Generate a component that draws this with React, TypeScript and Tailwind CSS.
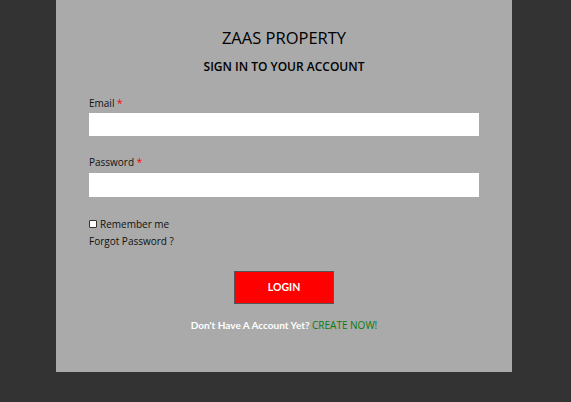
export default function App() {
  return (
    <div className="min-h-[402px] w-[571px] bg-[#333333]" style={{ fontFamily: '"Open Sans", sans-serif' }}>
      <div className="ml-[56px] h-[372px] w-[456px] bg-[#aaaaaa] px-[33px] pt-[27px]">
        <h1 className="text-center text-[16.5px] leading-[22px] text-black">ZAAS PROPERTY</h1>
        <h2 className="mt-[10px] text-center text-[12px] font-semibold leading-[16px] text-black">
          SIGN IN TO YOUR ACCOUNT
        </h2>

        <form className="mt-[21px]">
          <label className="block text-[10px] leading-[14px] text-[#111]">
            Email <span className="text-[#ff0000]">*</span>
          </label>
          <input type="email" className="mt-[3px] block h-[23px] w-[390px] bg-white outline-none" />

          <label className="mt-[19px] block text-[10px] leading-[14px] text-[#111]">
            Password <span className="text-[#ff0000]">*</span>
          </label>
          <input type="password" className="mt-[4px] block h-[24px] w-[390px] bg-white outline-none" />

          <div className="mt-[20px] flex items-center gap-[3px] text-[10px] leading-[14px] text-[#111]">
            <span className="inline-block h-[8px] w-[8px] rounded-[1px] border border-[#333] bg-white" />
            <span>Remember me</span>
          </div>
          <p className="mt-[3px] text-[10px] leading-[14px] text-[#111]">Forgot Password ?</p>

          <div className="mt-[23px] flex justify-center">
            <button
              type="button"
              className="h-[33px] w-[100px] border border-[#555] bg-[#ff0000] text-[10.5px] font-bold text-white"
              style={{ fontFamily: 'Lato, sans-serif' }}
            >
              LOGIN
            </button>
          </div>

          <p className="mt-[14px] text-center text-[10px] leading-[14px]" style={{ fontFamily: 'Lato, sans-serif' }}>
            <span className="font-bold text-white">Don't Have A Account Yet?</span>{' '}
            <span className="text-[#0a7a0a]" style={{ fontFamily: '"Open Sans", sans-serif' }}>CREATE NOW!</span>
          </p>
        </form>
      </div>
    </div>
  )
}
